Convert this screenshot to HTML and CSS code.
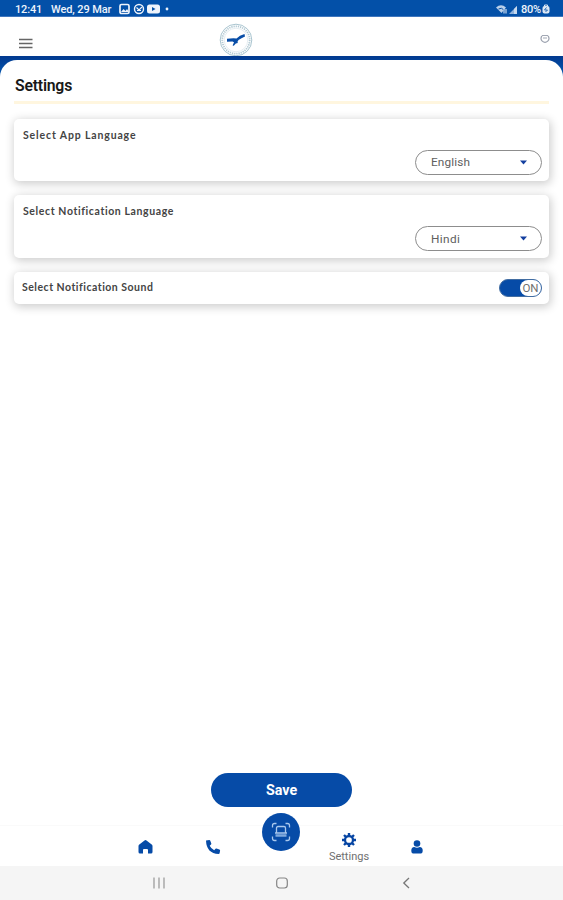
FILE: index.html
```html
<!DOCTYPE html>
<html lang="en">
<head>
<meta charset="utf-8">
<title>Settings</title>
<link rel="stylesheet" href="styles.css">
</head>
<body>
<div class="status">
  <span class="time">12:41</span><span class="date">Wed, 29 Mar</span>
  <svg class="status-icons" width="54" height="12" viewBox="0 0 54 12">
    <rect x="2" y="1.500" width="9" height="9" rx="1.500" fill="none" stroke="#eef3fb" stroke-width="1.700"/>
    <path d="M3 9l2.500-3 2 2 1.500-2 2 3z" fill="#eef3fb"/>
    <circle cx="21" cy="6" r="4.500" fill="none" stroke="#eef3fb" stroke-width="1.400"/>
    <path d="M18.500 4.500l2.500 2.500 3-3M19 7.500h4" fill="none" stroke="#eef3fb" stroke-width="1.200"/>
    <rect x="29" y="1.500" width="13" height="9" rx="2.500" fill="#eef3fb"/>
    <path d="M34 4v4l3.500-2z" fill="#0350a8"/>
    <circle cx="49" cy="6" r="1.400" fill="#eef3fb"/>
  </svg>
  <svg class="signal" width="23" height="11" viewBox="0 0 23 11">
    <path d="M0 3.500q5-4.500 10 0L5.500 9z" fill="#b9cfe9"/>
    <path d="M2.500 5q3-2 5.500 1" fill="none" stroke="#0350a8"/>
    <path d="M8 5v4.500M10 9.500V5" stroke="#b9cfe9" stroke-width="1.300"/>
    <path d="M13 10l8-8v8z" fill="#8fb2dc"/>
    <path d="M18 10V5l3-3v8z" fill="#c5d8ee"/>
  </svg>
  <span class="percent">80%</span>
  <svg width="8" height="10" viewBox="0 0 8 10"><rect x=".5" y="2" width="7" height="7.500" rx="2" fill="#dce7f4"/><path d="M2.500 2V1h3v1" stroke="#dce7f4" fill="none"/><path d="M4.500 3.500L2.500 6h3L3.500 8" fill="none" stroke="#0350a8" stroke-width=".8"/></svg>
</div>
<header class="header">
  <svg class="burger" width="14" height="11" viewBox="0 0 14 11"><path d="M0 1.500h13.500M0 5.500h13.500M0 9.500h13.500" stroke="#666" stroke-width="1.500"/></svg>
  <svg class="logo" width="34" height="34" viewBox="0 0 34 34">
    <circle cx="17" cy="17" r="15.800" fill="#fff" stroke="#9fbdca" stroke-width=".9"/>
    <circle cx="17" cy="17" r="13.700" fill="none" stroke="#b3cad4" stroke-width="1.800" stroke-dasharray="1.300 .9"/>
    <circle cx="17" cy="17" r="11.800" fill="none" stroke="#d3e1e7" stroke-width=".6"/>
    <path d="M8 15.800l6.500-.5 3 .3 3.500-2.800 4.500-1.800.5 2.500-3.500 1.800-3 1.700-1 1.800.3 1.200-2 .5-2 2.200-1.200-.2 1.400-3.300-1.500-.7-5.500.2z" fill="#084da7"/>
  </svg>
  <svg class="power" width="10" height="10" viewBox="0 0 10 10"><path d="M2 2a4 3.700 0 1 0 6 0" fill="none" stroke="#9ba1ae" stroke-width="1.200"/><path d="M2 1.500h6M3 4h4" stroke="#a2a8b4"/></svg>
</header>
<main class="stage">
  <section class="panel">
    <h1>Settings</h1>
    <div class="card"><span class="label app">Select App Language</span>
      <div class="select"><span>English</span><svg width="7" height="5" viewBox="0 0 7 5"><path d="M0 .5h7L3.500 4.500z" fill="#143f9f"/></svg></div></div>
    <div class="card"><span class="label notification">Select Notification Language</span>
      <div class="select"><span class="hindi">Hindi</span><svg width="7" height="5" viewBox="0 0 7 5"><path d="M0 .5h7L3.500 4.500z" fill="#143f9f"/></svg></div></div>
    <div class="card sound"><span class="label alert">Select Notification Sound</span><div class="toggle"><span>ON</span></div></div>
    <button class="save">Save</button>
  </section>
</main>
<nav class="tabs">
  <a class="tab"><svg width="15" height="14" viewBox="0 0 15 14"><path d="M7.500 0Q8 0 8.500.500l5.500 4.300.5 1V12q0 1.500-1.500 1.500h-3V10q0-1-1-1H6Q5 9 5 10v3.500H2Q.5 13.500.5 12V5.800L1 4.800 6.500.500Q7 0 7.500 0z" fill="#064ba7"/></svg></a>
  <a class="tab"><svg width="16" height="16" viewBox="0 0 16 16"><path d="M1 1.500L4.300 1q.7 0 1 .7l1 2.800q.2.600-.3 1L4.700 6.800q1.500 3 4.500 4.500l1.300-1.500q.5-.5 1-.3l2.900 1q.8.300.7 1l-.5 2.800q-.2.700-1 .7Q1.500 14.500 1 1.500z" fill="#064ba7"/></svg></a>
  <a class="tab scan"><svg width="20" height="20" viewBox="0 0 20 20" fill="none" stroke="#a9c8ed" stroke-width="1.300"><path d="M1.500 5.500v-2q0-2 2-2h2M14.500 1.500h2q2 0 2 2v2M18.500 14.500v2q0 2-2 2h-2M5.500 18.500h-2q-2 0-2-2v-2"/><path d="M5.500 10.500V6q0-1.500 1.500-1.500h6q1.500 0 1.500 1.500v4.500M4 11h12"/><path d="M4.500 13.500h11" stroke="#7fa9dc" stroke-width="2.500"/></svg></a>
  <a class="tab active"><svg width="14" height="14" viewBox="0 0 14 14"><circle cx="7" cy="7" r="4" fill="none" stroke="#0645a3" stroke-width="2.300"/><path d="M7 0v2.500M7 11.500V14M0 7h2.500M11.500 7H14M2 2l2 2M10 10l2 2M12 2l-2 2M4 10l-2 2" stroke="#0645a3" stroke-width="2.400"/></svg><span>Settings</span></a>
  <a class="tab"><svg width="12" height="14" viewBox="0 0 12 14"><circle cx="6" cy="3.500" r="3.300" fill="#064ba7"/><path d="M.3 10.500q0-3.500 3-3.500Q6 8.500 8.700 7q3 0 3 3.500 0 3-1.800 3H2.100q-1.800 0-1.800-3z" fill="#064ba7"/></svg></a>
</nav>
<footer class="system">
  <svg width="12" height="12" viewBox="0 0 12 12"><path d="M1 .5v11M6 .5v11M11 .5v11" stroke="#969696" stroke-width="1.200"/></svg>
  <svg width="12" height="12" viewBox="0 0 12 12"><rect x=".7" y="1" width="10.600" height="10" rx="3" fill="none" stroke="#858585" stroke-width="1.200"/></svg>
  <svg width="12" height="12" viewBox="0 0 12 12"><path d="M9 1L3.800 6 9 11" fill="none" stroke="#777" stroke-width="1.300"/></svg>
</footer>
</body>
</html>
```
FILE: styles.css
```css
* { box-sizing: border-box; }
body { margin: 0; width: 563px; height: 900px; display: flex; flex-direction: column; overflow: hidden; background: #fff; font-family: Roboto, sans-serif; }
svg { display: block; flex: none; }
.status { height: 17px; flex: none; display: flex; align-items: center; padding: 2px 13px 0 15px; background: #0350a8; border-bottom: 1px solid #3f76bd; color: #edf3fb; font-size: 11px; font-weight: 500; white-space: nowrap; }
.time { width: 36px; letter-spacing: -.15px; }
.date { width: 67px; letter-spacing: -.1px; }
.signal { margin-left: auto; margin-right: 2px; }
.percent { width: 21px; letter-spacing: -.2px; }
.header { height: 39px; flex: none; display: flex; align-items: flex-start; padding: 6px 13px 0 19px; }
.burger { margin-top: 15px; }
.logo { margin-left: 186px; }
.power { margin: 11px 0 0 auto; }
.stage { flex: none; height: 769px; background: linear-gradient(#02398f, #0350a8 14px); padding-top: 4px; }
.panel { height: 765px; display: flex; flex-direction: column; background: #fff; border-radius: 17px 17px 0 0; padding: 14px 14px 0; }
h1 { margin: 0 0 14.500px; height: 30px; border-bottom: 3px solid #fff6df; font-size: 15.800px; line-height: 23px; font-weight: 600; letter-spacing: -.22px; color: #181818; padding-left: 1px; }
.card { height: 62.500px; flex: none; margin-bottom: 14px; border-radius: 5px; background: #fff; box-shadow: 1px 2px 10px 1px rgba(0, 0, 0, .2); padding: 9px 7px 0 9px; display: flex; flex-direction: column; }
.label { font-family: Lato, sans-serif; font-size: 10.500px; line-height: 15px; font-weight: 700; color: #444; white-space: nowrap; }
.app { letter-spacing: .86px; }
.notification { letter-spacing: .61px; }
.alert { letter-spacing: .5px; }
.select { align-self: flex-end; margin-top: 7px; width: 127px; height: 25px; border: 1px solid #8d8d8d; border-radius: 13px; display: flex; align-items: center; justify-content: space-between; padding: 0 14px 0 15px; color: #606060; font-size: 11.800px; }
.select span { letter-spacing: .12px; }
.select .hindi { letter-spacing: .4px; }
.sound { height: 32px; flex-direction: row; align-items: center; justify-content: space-between; padding: 0 7px 0 8px; }
.toggle { width: 43px; height: 18px; border-radius: 9px; background: #064ba7; border: 1px solid #426da2; display: flex; justify-content: flex-end; }
.toggle span { width: 21px; height: 16px; border-radius: 8px; background: #fff; color: #707070; font-size: 11.500px; line-height: 17px; text-align: center; }
.save { margin: auto auto 18px; width: 141px; height: 34px; border: 0; border-radius: 17px; background: #064ba7; color: #fff; font: 700 14.300px/34px Roboto, sans-serif; padding: 0; }
.tabs { height: 41px; flex: none; border-top: 1px solid #fafafa; display: grid; grid-template-columns: repeat(5, 68px); justify-content: center; background: #fff; padding-right: 1px; }
.tab { display: flex; flex-direction: column; align-items: center; justify-content: center; padding-top: 2px; }
.scan { width: 38px; height: 38px; margin: -13px auto 0; border-radius: 50%; background: #064ba7; padding: 0; }
.active { justify-content: flex-start; padding-top: 7px; color: #707070; font-size: 11px; line-height: 15px; }
.active span { margin-top: 2px; }
.system { height: 34px; flex: none; background: #f5f5f5; display: grid; grid-template-columns: repeat(3, 123.500px); justify-content: center; align-items: center; justify-items: center; padding-left: 1px; }
```
